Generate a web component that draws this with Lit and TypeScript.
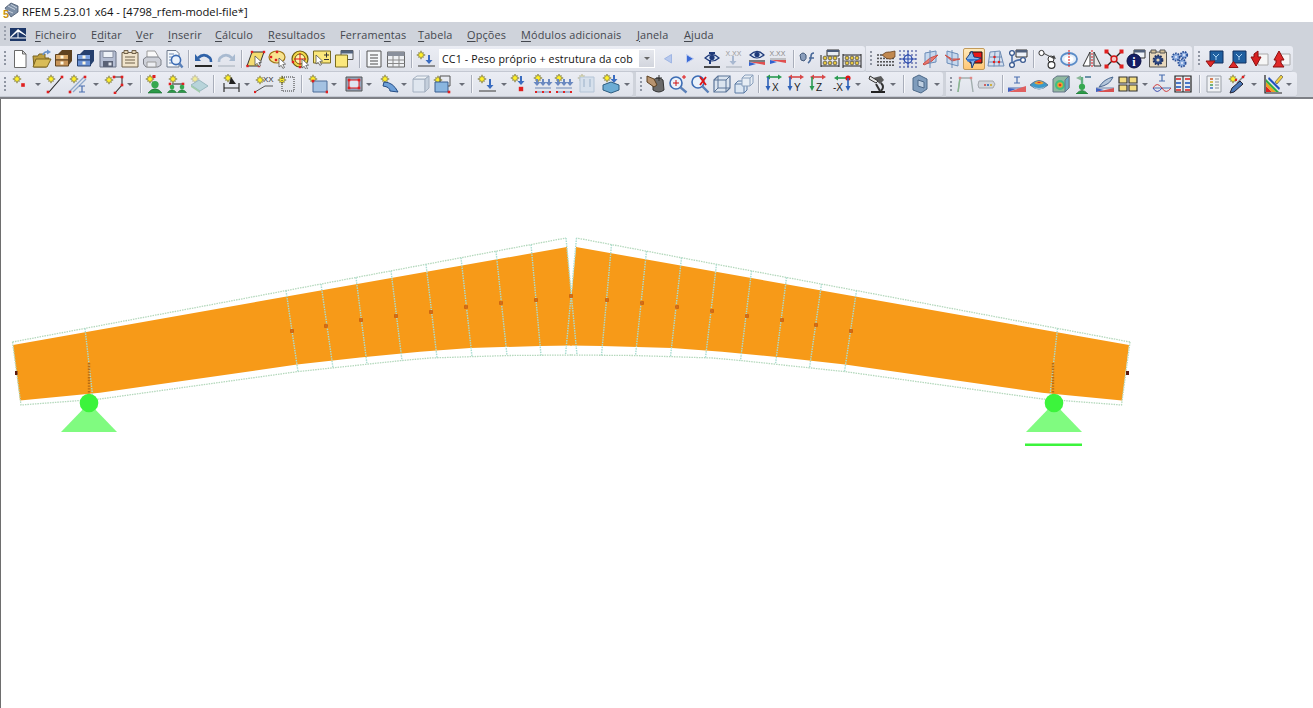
import { LitElement, html, css, svg } from "lit";
import { customElement } from "lit/decorators.js";
import { unsafeSVG } from "lit/directives/unsafe-svg.js";

// ---- icon helpers (20x20 pixel box) ----
const star = (x: number, y: number, r = 4.2, o = 1) => {
  const p: string[] = [];
  for (let i = 0; i < 16; i++) {
    const rr = i % 2 ? r * 0.5 : i % 4 === 0 ? r : r * 0.8;
    const a = (i * Math.PI) / 8;
    p.push(`${(x + rr * Math.cos(a)).toFixed(1)},${(y + rr * Math.sin(a)).toFixed(1)}`);
  }
  return `<polygon points="${p.join(" ")}" fill="#fff02a" stroke="#6f6a3a" stroke-width=".6" opacity="${o}"/>`;
};
const N = (x: number, y: number, s = 3, c = "#e02020") =>
  `<rect x="${x - s / 2}" y="${y - s / 2}" width="${s}" height="${s}" fill="${c}"/>`;
const L = (d: string, c = "#222", w = 1) => `<path d="${d}" fill="none" stroke="${c}" stroke-width="${w}"/>`;
const F = (d: string, c: string, st = "none", w = 1) => `<path d="${d}" fill="${c}" stroke="${st}" stroke-width="${w}"/>`;
const T = (x: number, y: number, s: string, c = "#333", fs = 8) =>
  `<text x="${x}" y="${y}" font-family="Liberation Sans" font-size="${fs}" fill="${c}">${s}</text>`;
const D = (d: string, c: string) => `<path d="${d}" fill="none" stroke="${c}" stroke-dasharray="2 1"/>`;
const cab = (a: string, b: string, c: string) =>
  F("M4 5l4-4h10v11l-4 5z", c) +
  F("M1.5 5.5h13v5.5h-13z", a, c) +
  F("M1.5 11h13v6h-13z", b, c) +
  N(8, 8, 3, "#fff8e0") +
  N(8, 14, 3, "#fff8e0");
const mag = (x = 12, y = 11, c = "#3c6cb4", r = 4.6) =>
  `<circle cx="${x}" cy="${y}" r="${r}" fill="#eaf2fb" stroke="${c}" stroke-width="1.6"/>` + L(`M${x + r * 0.7} ${y + r * 0.7}l${18.5 - x - r * 0.7} ${18.5 - y - r * 0.7}`, "#5a80b8", 2.4);
const cursor = (x: number, y: number) =>
  F(`M${x} ${y}l0 9l2.2 -1.6l1.7 3l1.6 -.9l-1.7 -3l2.8 -.4z`, "#fff", "#555", 0.8);
const eye = (y = 8) =>
  F(`M3 ${y}q7 -7 14 0q-7 6 -14 0z`, "#d8e4f4", "#1f3a7a", 1.2) + `<circle cx="10" cy="${y - 0.5}" r="2.6" fill="#1f3a7a"/>`;
const grad = (y: number) => F(`M2 ${y}h16v3z`, "#e05050") + F(`M2 ${y}v4l7 -2z`, "#3060d0");
const xx = (c = "#9a9a9a") => T(1.5, 6.5, "X.XX", c, 7);
const arrDown = (x: number, y: number, c = "#2e62c0", h = 8) =>
  L(`M${x} ${y}v${h}`, c, 2) + F(`M${x - 3.5} ${y + h - 1}h7l-3.5 4z`, c);
const abacus = () =>
  [5, 10, 15].map((x) => [9, 14].map((y) => `<circle cx="${x}" cy="${y}" r="1.9" fill="#e8c840" stroke="#444" stroke-width=".7"/>`).join("")).join("");
const cube = (x: number, y: number, s: number, st = "#5b7ba4", fill = "#dbe6f2") =>
  F(`M${x} ${y + 3}l3 -3h${s}v${s}l-3 3h-${s}z`, fill, st) + L(`M${x} ${y + 3}h${s}v${s}M${x + s} ${y + 3}l3 -3`, st);
const axis = (label: string, a: string, b: string) =>
  L("M4 3h12", a, 1.6) + F("M14 0.5l4 2.5l-4 2.5z", a) + F("M6 0.5l-4 2.5l4 2.5z", a) + L("M4 3v11", b, 1.6) + F("M1.5 12h5l-2.5 5z", b) + T(8, 17, label, "#222", 10);
const green = (x: number, y: number, s = 1) =>
  F(`M${x - 5 * s} ${y + 5 * s}q${5 * s} -${6 * s} ${10 * s} 0z`, "#2c9a48", "#166a2c", 0.6) + `<circle cx="${x}" cy="${y - 1 * s}" r="${2.6 * s}" fill="#36a850"/>`;
const I = (x: number, y: number, c = "#4a6fb0") => L(`M${x - 3} ${y}h6M${x} ${y}v6M${x - 3} ${y + 6}h6`, c, 1.2);

const icons: Record<string, string> = {
  new: F("M4.5 1.5h8l3.5 3.5v13.5h-11.5z", "#fff", "#6a6a6a") + F("M12.5 1.5v3.5h3.5z", "#dcdcdc", "#6a6a6a"),
  open: F("M1 7h5l1-2h6v4h4l-3 9H2z", "#bfa040", "#7a6420") + F("M4 10h15l-4 8H1z", "#d9bc58", "#7a6420") + L("M11 6q1-4 6-3", "#6a94cc", 1.6) + F("M15 .5l4 2.5l-4 2.5z", "#6a94cc"),
  cabB: cab("#d8a868", "#c8955a", "#5e4220"),
  cabBl: cab("#7ea4e2", "#6a92d6", "#26406e"),
  save: F("M2 2h15l1 1v15h-16z", "#b4bdd2", "#6c7488") + F("M5 2.5h10v6h-10z", "#eef2f8", "#8a92a4") + F("M5 12h10v6h-10z", "#5a6276") + N(12, 15, 3, "#dfe3ec"),
  notes: F("M2 3.5h16v14.5h-16z", "#f0e4cc", "#6f604a") + F("M4 1.5h4v3h-4zM12 1.5h4v3h-4z", "#e2d2b2", "#6f604a") + L("M5 8h10M5 11h10M5 14h10", "#6f604a"),
  print: F("M5 2h8l3 5v4h-11z", "#fafafa", "#9a9a9a") + F("M1.5 10l3-2h12l2.5 3v5l-3 2h-12l-2.5-3z", "#cdd0d8", "#7d8088") + F("M5 13h9v5h-9z", "#eceef2", "#9a9a9a"),
  prev2: F("M3 1.5h9l3 3v13.5h-12z", "#f4f8fc", "#6f7a8c") + L("M5 5h5M5 8h4M5 11h3M5 14h3", "#6f8ab0") + mag(12, 11),
  undo: L("M4 9q6-6 12 0q1 1 1 4", "#2f62a8", 2.6) + F("M1 5l6 7H1z", "#2f62a8") + L("M1 17h17", "#111", 1.8),
  redo: L("M16 9q-6-6-12 0q-1 1-1 4", "#a8bad0", 2.6) + F("M19 5l-6 7h6z", "#a8bad0") + L("M2 17h17", "#c0c6d0", 1.8),
  sel1: F("M6 3h12l-5 14H1z", "#f4dc70", "#333") + N(6, 3, 2.4) + N(18, 3, 2.4) + N(13, 17, 2.4) + N(1.5, 17, 2.4) + cursor(9, 7),
  sel2: `<ellipse cx="9" cy="8" rx="8" ry="6" fill="#f8e490" stroke="#a07818" stroke-width="1.2"/>` + N(3, 8, 2.4) + N(9, 3, 2.4) + N(8, 11, 2.4) + cursor(11, 9),
  sel3: `<circle cx="10" cy="10" r="8" fill="#f4d84a" stroke="#6a5a10" stroke-width="1.2"/><circle cx="10" cy="10" r="5" fill="#fff4b0" stroke="#6a5a10"/>` + L("M10 4v12M4 10h12", "#e01414") + N(10, 18, 2.4) + N(3, 13, 2.4) + cursor(12, 10),
  sel4: F("M1.5 2h17v12h-17z", "#fbe87c", "#7a6c20") + L("M12 6h5M14.5 3.5v5M12 10.5h5", "#333") + cursor(4, 6),
  win: F("M7 1.5h12v9h-12z", "#e8edf4", "#555") + F("M7 1.5h12v3h-12z", "#52627c") + F("M1.5 6h12v12h-12z", "#fbe87c", "#7a6c20"),
  list: F("M3 2h14v16h-14z", "#f6f8fa", "#555") + L("M6 6h8M6 9h8M6 12h8M6 15h8", "#4a4a4a"),
  table: F("M1.5 3h17v15h-17z", "#eff1f4", "#666") + F("M1.5 3h17v4h-17z", "#8a909c") + L("M7 7v11M13 7v11M1.5 11h17M1.5 14.5h17", "#888"),
  load: star(5, 6) + arrDown(13, 6, "#3a6cc0", 6) + L("M2 17h17", "#555", 1.2),
  prevT: F("M13.5 5.5v8.5l-7-4.25z", "#b7c9ee", "#a0b6e4"),
  nextT: F("M6.5 5.5v8.5l7-4.25z", "#3a6ad6", "#bfcdf0"),
  eyeP: eye(9) + L("M8 11v4", "#1f3a7a", 2) + L("M2 18h16", "#222", 1.6) + F("M7 3h6v2h-6z", "#1f3a7a"),
  xxa: xx() + arrDown(9, 7, "#a8b8d0", 6) + L("M2 18h16", "#b6bcc6", 1.4),
  eye2: eye(6) + L("M2 12h16", "#333", 1.2) + grad(13),
  xxb: xx("#888") + L("M2 10h16", "#999") + grad(11),
  gf: F("M2 6q3-4 6 0q1 4-2 6l-3-1z", "#8a9ebc", "#445a7a") + L("M10 14q3-2 3-7q0-3 3-3M11 9h5", "#4a6a9a", 1.6),
  ab1: F("M7 1h12v6h-12z", "#e6ecf4", "#333") + F("M7 1h12v2h-12z", "#4a5a78") + abacus() + L("M1 6v12M19 9v9M1 17h18", "#222"),
  ab2: abacus() + L("M1 5v14M19 5v14M1 6h18M1 17h18", "#222") + L("M1 12h18", "#666"),
  hand: Array.from({ length: 24 }, (_, i) => N(2 + (i % 6) * 3, 6 + Math.floor(i / 6) * 3.4, 1.6, "#333")).join("") + F("M6 6q4-4 8-3l5-1v6l-4 2q-4 1-9-4z", "#c08850", "#5c3a1c", 0.7),
  cross: Array.from({ length: 25 }, (_, i) => N(2 + (i % 5) * 4, 2 + Math.floor(i / 5) * 4, 1.4, "#2a3a90")).join("") + `<circle cx="10" cy="10" r="4" fill="#dbe4f4" stroke="#2040a8" stroke-width="1.2"/>` + L("M10 2v16M2 10h16", "#2040a8"),
  pl1: F("M5 4l11-2v11l-11 2z", "#c6d8ee", "#6a8cb8") + F("M3 15l7-6 8-3-6 6-8 4z", "#e87a70", "#cc5048") + L("M10 1v18", "#6a8cb8"),
  pl2: F("M5 2l11 3v12l-11-3z", "#c6d8ee", "#6a8cb8") + F("M3 6l7 4 8 0-8 2z", "#e87a70", "#cc5048") + L("M10 1v18", "#6a8cb8"),
  pl3: F("M6 3h12v11h-12z", "#e81818", "#111") + F("M2 10l6-8 2 6 7 1-6 3-3 7-1-6z", "#8ab8ea", "#1f3f78") + F("M2 10h15l-13 3z", "#3a78d0"),
  grid: F("M4 3l10-1 4 15H2z", "#d4e0f0", "#6f8cb4") + L("M9 2.5l-1 15M4 8h12M3 13h14M14 3l-1 14", "#6f8cb4") + N(8.5, 8, 2.2) + N(13, 13, 2.2) + N(8, 13, 2.2),
  nodesW: F("M8 1h11v7h-11z", "#eef2f8", "#333") + F("M8 1h11v2.5h-11z", "#50607c") + L("M4 5v10q3-5 10-4", "#4a6fa8", 1.6) + `<circle cx="4" cy="4" r="2.4" fill="#fff" stroke="#3a5a90" stroke-width="1.3"/><circle cx="4" cy="16" r="2.4" fill="#fff" stroke="#3a5a90" stroke-width="1.3"/><circle cx="15" cy="11" r="2.4" fill="#fff" stroke="#3a5a90" stroke-width="1.3"/>`,
  chain: `<circle cx="3.5" cy="4" r="2.6" fill="#fff" stroke="#333"/><circle cx="13" cy="10" r="3" fill="#fff" stroke="#333"/><circle cx="13.5" cy="16" r="3.4" fill="#fff" stroke="#333" stroke-width="1.2"/>` + L("M6 4.5l10 5", "#444") + F("M18 10l-4-1 2-3z", "#444"),
  loop: `<ellipse cx="10" cy="10" rx="8" ry="6" fill="#e4eef8" stroke="#5a8cc8" stroke-width="1.8"/><ellipse cx="10" cy="10" rx="4.5" ry="3" fill="#fff"/>` + D("M10 1v18", "#e01414"),
  mirror: F("M8 3v14H1z", "#fff", "#333") + F("M12 3v14h7z", "#e8e8e8", "#333") + D("M10 1v18", "#e01414"),
  xcross: L("M3 3l14 14M17 3L3 17", "#222", 1.4) + `<circle cx="10" cy="10" r="3" fill="#f0c4c4" stroke="#d01010" stroke-width="1.4"/>` + N(2.5, 2.5, 4) + N(17.5, 2.5, 4) + N(2.5, 17.5, 4) + N(17.5, 17.5, 4),
  info: F("M8 1h11v8h-11z", "#eef2f8", "#333") + F("M8 1h11v2.5h-11z", "#50607c") + `<circle cx="8" cy="12" r="7" fill="#141e66" stroke="#0a0f44"/>` + `<text x="6.2" y="16.5" font-family="Liberation Serif" font-weight="700" font-size="12" fill="#fff">i</text>`,
  gearbox: F("M1.5 3h17v15h-17z", "#e8d8bc", "#555") + F("M3 1h5v3h-5zM12 1h5v3h-5z", "#d4c098", "#555") + `<circle cx="10" cy="11" r="4.4" fill="#2e4a88" stroke="#1d2f60" stroke-width="2" stroke-dasharray="1.6 1.2"/><circle cx="10" cy="11" r="1.6" fill="#e8d8bc"/>`,
  gears: [[6, 8, 3.6], [14, 6, 3.2], [12, 14, 3.6]].map(([x, y, r]) => `<circle cx="${x}" cy="${y}" r="${r}" fill="#8fb0e0" stroke="#2a4f98" stroke-width="1.8" stroke-dasharray="1.6 1"/><circle cx="${x}" cy="${y}" r="1" fill="#eef"/>`).join(""),
  bDown: F("M6 2h13v12h-13z", "#1f5fa0", "#103060") + L("M9 5l3 3 3-3M12 8v3", "#a8d0f0") + F("M2 12h9l-4.5 6z", "#e02828", "#901414"),
  bUp: F("M6 2h13v12h-13z", "#1f5fa0", "#103060") + L("M9 5l3 3 3-3M12 8v3", "#a8d0f0") + F("M2 18.5h9l-4.5-6z", "#e02828", "#901414"),
  rDown: F("M9 5h10v11h-10z", "#f6f6f6", "#aaa") + F("M9 2v6h3l-5 9-5-9h3V5z", "#d82020", "#8a1010"),
  rUp: F("M9 5h10v11h-10z", "#f6f6f6", "#aaa") + F("M8 2l5 9h-3v3l3 4H2l3-4v-3H3z", "#e02828", "#8a1010"),
  // row 2
  sNode: star(7, 5) + N(13, 11, 3.6),
  sLine: star(6, 5) + L("M4 18L17 3", "#222", 1.1) + N(3, 18, 2.6) + N(17, 3, 2.6),
  sDbl: star(6, 5) + L("M2 17L16 3M5 18L18 5", "#8fa8cc", 1.3) + N(2, 18, 2.6) + N(17, 3, 2.6) + I(14, 12),
  sPoly: star(5, 6) + L("M9 3h9v8l-7 8", "#333", 1.1) + N(10, 3, 2.6) + N(18, 3, 2.6) + N(18, 11, 2.6) + N(11, 19, 2.6),
  sSup: star(6, 5) + N(10, 2.5, 3) + green(11, 12, 1.4),
  sSup2: star(6, 5) + L("M5 10h11", "#222") + N(3, 10, 2.6) + N(16, 10, 2.6) + green(5, 14, 0.9) + green(15, 14, 0.9),
  sPlate: star(6, 5, 4.2, 0.45) + F("M2 11l8-5 9 6-8 5z", "#b8d4da", "#9ab8c0") + F("M2 11l9 6v2l-9-6z", "#a0ccaa"),
  sDim: star(7, 4) + L("M3 9v9M18 9v9M3 14h15", "#222", 1.1) + F("M10 3l5 7h-7z", "#222"),
  sXX: star(6, 6) + L("M1 18l10-6h8", "#555") + T(9, 8, "XX", "#333", 8) + N(1, 18, 2.2),
  sDot: star(6, 6) + `<path d="M6 3h12v14h-12z" fill="none" stroke="#333" stroke-dasharray="1 1"/>`,
  sSurf: star(5, 5) + F("M5 7h14v11h-14z", "#a4c2e2", "#4c6c98") + N(5, 7, 2.6) + N(19, 18, 2.6),
  frame: F("M2 3h16v14h-16z", "#95a6bc", "#555") + F("M5 6h10v8h-10z", "#dfe7f0", "#e01414") + N(5, 6, 2.6) + N(15, 6, 2.6) + N(5, 14, 2.6) + N(15, 14, 2.6),
  sCurve: star(5, 5) + F("M4 8q9 0 14 10l-8-1q0-4-7-5z", "#6ea0d8", "#244c84"),
  box3: F("M2 5h12v13h-12z", "#dfe6ef", "#a4b0c0") + F("M2 5l4-3h12l-4 3z", "#eef2f6", "#a4b0c0") + F("M14 5l4-3v12l-4 4z", "#c4cfdc", "#a4b0c0"),
  sSolid: star(5, 6) + F("M2 8h13v10h-13z", "#8ab6e0", "#3a5f90") + L("M7 2h10v10h-2M7 2v6", "#555") + N(16, 18, 2.6),
  sLoad: star(5, 5) + arrDown(13, 5, "#3a6cc0", 7) + L("M2 17h17", "#555", 1.2),
  sLoadN: star(6, 4) + arrDown(12, 2, "#3a6cc0", 6) + N(12, 15, 4.4),
  sLoads: star(5, 4) + L("M2 14h16M2 18h16", "#6f88b4") + [3, 9, 15].map((x) => arrDown(x + 1, 5, "#6a88c0", 4)).join("") + N(3, 18, 2) + N(10, 18, 2) + N(17, 18, 2),
  sLoadsF: star(5, 4, 4.2, 0.45) + F("M3 3h14v15H3z", "#d6e0ec", "#b4c4d6") + L("M7 5v8M13 5v8", "#b8c8da", 2),
  sBox: star(6, 4) + arrDown(13, 1, "#3a6cc0", 5) + F("M2 11l8-3 8 3v5l-8 3-8-3z", "#6cacd4", "#2c5c80"),
  handBox: F("M7 6q5-4 10 0l1 10q-5 4-11 0z", "#6a6a6a", "#333") + F("M1 2l7 3 3 6-3 2-7-5z", "#b89470", "#5c4020") + L("M13 1v6M10 4h6", "#333"),
  magRed: mag(8, 9, "#3c6cb4", 6) + L("M8 6v6M5 9h6", "#d01010") + L("M16 1v4M14 3h4", "#e01414"),
  magX: mag(8, 8, "#3c6cb4", 6) + L("M10 3l6 8M16 3l-6 8", "#e01414", 1.8),
  cubeT: F("M2 6l4-4h12v12l-4 4H2z", "#dbe4ef", "#5a7498", 1.2) + L("M2 6h12v12M14 6l4-4M6 2v12h12M2 18l4-4", "#5a7498"),
  cubes: cube(1, 7, 9) + cube(8, 1, 8, "#8aa0bc", "#e7edf4"),
  axX: axis("X", "#2a9a50", "#2c60b8"),
  axY: axis("Y", "#d84848", "#2c60b8"),
  axZ: axis("Z", "#d84848", "#2a9a50"),
  axNX: L("M4 4h11", "#2a9a50", 1.6) + F("M6 1.5l-4 2.5 4 2.5z", "#2a9a50") + `<circle cx="16" cy="4" r="2.6" fill="#e01414"/>` + L("M16 4v9", "#2c60b8", 1.6) + F("M13.5 12h5l-2.5 5z", "#2c60b8") + T(1, 17, "-X", "#222", 10),
  micro: F("M5 4l8-2 3 4-4 4z", "#5a5a5a") + F("M3 17h14v2H3z", "#222") + L("M13 9q4 4 0 8M8 10l4 7", "#333", 2) + F("M2 2l8 5-2 2-7-4z", "#e4e4e4", "#333"),
  chair: F("M3 4l6-3 8 4v10l-6 4-8-3z", "#7f9cbc", "#4c6888") + F("M8 6l6 2v6l-6-2z", "#c0d0e2", "#4c6888"),
  frameC: L("M3 18l2-14h11l2 14", "#a2aeae", 1.4) + L("M3 18l2-14", "#8ab890", 1.4) + N(5, 4, 2.4, "#d88") + N(16, 4, 2.4, "#d88"),
  pill: F("M2 7h14l2 3-2 4H2l-1-3z", "#d2d6dc", "#a2a6ac") + N(8, 11, 2, "#d06060") + N(11, 11, 2, "#5080c0") + N(14, 11, 2, "#d0b040"),
  iGrad: I(10, 3, "#4a6fb0") + L("M1 14h18", "#4a6fb0") + F("M1 18l18-6v6z", "#e06060") + F("M1 14v4l8-3z", "#4060c0"),
  ell: F("M1 11q9-9 18 0q-9 8-18 0z", "#3a9acb", "#5a7a9a") + F("M5 9q5-4 10 0q-5 3-10 0z", "#f0a030") + F("M8 8.5q2-1.5 4 0q-2 1-4 0z", "#e03030") + F("M3 12q7 4 14 0q-7 7-14 0z", "#a0c0d8"),
  cubeC: F("M2 5l4-3h12v12l-4 4H2z", "#8fb8a0", "#667788") + `<circle cx="9" cy="11" r="5" fill="#40c080"/><circle cx="9" cy="11" r="2.8" fill="#f0a030"/><circle cx="9" cy="11" r="1.3" fill="#e03030"/>` + F("M14 6l4-4v12l-4 4z", "#6aa8c0", "#667788"),
  supA: green(9, 14, 1.2) + L("M9 3v7", "#60b080", 2.4) + F("M3 4l5-2.5v5z", "#8ab898") + L("M12 3h6", "#6a90a8", 2),
  slant: F("M4 13q5-8 14-10q-3 8-14 10z", "#b4c6da", "#4a6890") + L("M1 14h18", "#6a84a8") + F("M1 18l18-4v4z", "#d85050") + F("M1 14v4l8-2z", "#4060c0"),
  four: F("M1 3h8v6h-8zM11 3h8v6h-8zM1 11h8v6h-8zM11 11h8v6h-8z", "#f2dc80", "#333", 1.2),
  iWave: I(10, 1) + L("M1 14h18", "#4a6fb0") + L("M1 14q4-7 9 0", "#d04040") + L("M10 14q4 7 9 0", "#d04040") + L("M1 14q4 7 9 0", "#4050b0"),
  tableC: F("M2 2h16v16h-16z", "#e8ecf2", "#222", 1.2) + F("M3 4h5v2H3zM12 4h5v2h-5z", "#e05050") + F("M3 8h5v2H3zM12 8h5v2h-5z", "#4a78c8") + F("M3 12h5v2H3zM12 12h5v2h-5z", "#4a78c8") + F("M3 15h5v2H3zM12 15h5v2h-5z", "#e05050") + L("M10 2v16", "#222"),
  docC: F("M3 2h14v16h-14z", "#f0f2f4", "#9aa0a8") + L("M6 5h3", "#d06030", 1.6) + L("M6 8h3", "#d8b030", 1.6) + L("M6 11h3", "#50a060", 1.6) + L("M6 14h3", "#4a78c8", 1.6) + L("M11 5h4M11 8h4M11 11h4M11 14h4", "#8a9098"),
  brush: star(5, 5) + L("M17 1l-8 8", "#888", 1.4) + F("M4 14l8-7 3 3-9 8-4 1z", "#4a78b8", "#223") + N(15, 3, 2.4) + N(8, 6, 2),
  rainbow: L("M2 1v18h17", "#222", 1.2) + F("M3 18l0-6 6 6z", "#e02020") + F("M3 12V8l10 10H9z", "#f0a020") + F("M3 8V5l13 13h-3z", "#30b040") + F("M5 5l11 11 1-2-11-11z", "#2050c0") + F("M12 8l6-7 2 2-6 7z", "#f0d040", "#444", 0.6),
};

// ---- toolbar data: [kind/icon, centre x] ----
type Item = [string, number];
type Group = { x0: number; x1: number; items: Item[] };
const row1: Group[] = [
  { x0: 0, x1: 865, items: [["new", 20], ["open", 42], ["cabB", 64], ["cabBl", 86], ["save", 108], ["notes", 130], ["print", 152], ["prev2", 174], ["|", 188], ["undo", 204], ["redo", 226], ["|", 241], ["sel1", 256], ["sel2", 278], ["sel3", 300], ["sel4", 322], ["win", 344], ["|", 359], ["list", 374], ["table", 396], ["|", 411], ["load", 426], ["#combo", 547], ["prevT", 668], ["nextT", 690], ["eyeP", 712], ["xxa", 734], ["eye2", 757], ["xxb", 778], ["|", 793], ["gf", 808], ["ab1", 830], ["ab2", 852]] },
  { x0: 866, x1: 1192, items: [["hand", 886], ["cross", 908], ["pl1", 930], ["pl2", 952], ["*pl3", 974], ["grid", 996], ["nodesW", 1018], ["|", 1033], ["chain", 1048], ["loop", 1069], ["mirror", 1092], ["xcross", 1114], ["info", 1136], ["gearbox", 1158], ["gears", 1180]] },
  { x0: 1194, x1: 1293, items: [["bDown", 1214], ["bUp", 1237], ["rDown", 1259], ["rUp", 1281]] },
];
const row2: Group[] = [
  { x0: 0, x1: 633, items: [["sNode", 20], ["v", 38], ["sLine", 55], ["sDbl", 78], ["v", 96], ["sPoly", 114], ["v", 130], ["|", 140], ["sSup", 154], ["sSup2", 177], ["sPlate", 199], ["|", 213], ["sDim", 231], ["v", 247], ["sXX", 264], ["sDot", 286], ["|", 301], ["sSurf", 318], ["v", 334], ["frame", 354], ["v", 369], ["sCurve", 390], ["v", 404], ["box3", 421], ["sSolid", 443], ["v", 462], ["|", 471], ["sLoad", 487], ["v", 504], ["sLoadN", 519], ["sLoads", 543], ["sLoads", 564], ["sLoadsF", 587], ["sBox", 611], ["v", 627]] },
  { x0: 636, x1: 943, items: [["handBox", 656], ["magRed", 678], ["magX", 700], ["cubeT", 722], ["cubes", 744], ["|", 758], ["axX", 774], ["axY", 796], ["axZ", 818], ["axNX", 842], ["v", 858], ["micro", 878], ["v", 893], ["|", 903], ["chair", 920], ["v", 937]] },
  { x0: 946, x1: 1297, items: [["frameC", 965], ["pill", 987], ["|", 1002], ["iGrad", 1017], ["ell", 1039], ["cubeC", 1061], ["supA", 1083], ["slant", 1105], ["four", 1128], ["v", 1145], ["iWave", 1162], ["tableC", 1183], ["|", 1199], ["docC", 1214], ["brush", 1238], ["v", 1254], ["rainbow", 1273], ["v", 1289]] },
];
const widths = (k: string) => (k === "|" ? 1 : k === "v" ? 6 : k === "#combo" ? 216 : 22);

const menus: [string, string, string][] = [
  ["", "F", "icheiro"], ["E", "d", "itar"], ["", "V", "er"], ["", "I", "nserir"], ["", "C", "álculo"], ["", "R", "esultados"],
  ["Ferrame", "n", "tas"], ["", "T", "abela"], ["", "O", "pções"], ["", "M", "ódulos adicionais"], ["", "J", "anela"], ["", "A", "juda"],
];
const menuX = [35, 91, 136, 168, 215, 268, 340, 418, 467, 521, 637, 684, 760];

// ---- beam geometry (page coordinates) ----
const bottomL: [number, number][] = [[20, 400.5], [100, 392.8], [140, 387], [297, 364.5], [360, 357.5], [420, 351.7], [470, 348], [540, 346], [572, 345.5]];
const outL: [number, number][] = [[21, 405], [100, 399], [297, 371.7], [400, 360.7], [430, 358], [470, 356.7], [510, 355.5], [572, 355]];
const MX = 1142;
const lerp = (pts: [number, number][], x: number) => {
  for (let i = 1; i < pts.length; i++) if (x <= pts[i][0]) {
    const [a, b] = pts[i - 1], [c, d] = pts[i];
    return b + ((x - a) / (c - a)) * (d - b);
  }
  return pts[pts.length - 1][1];
};
const topY = (x: number) => 342 - (x - 12.5) * 0.1879;
const pstr = (p: [number, number][]) => p.map((q) => q.join(",")).join(" ");
const beamL: [number, number][] = [[13, 345], [567, 247], [571.5, 296], ...bottomL.slice().reverse()];
const beamR: [number, number][] = beamL.map(([x, y]) => [x === 571.5 ? 571.5 : MX - x + (x === 567 ? 1 : 0), y]);
const stations: [number, number][] = [[85, 93], [286, 298], [321, 333], [356, 367], [391, 402], [426, 437], [461, 472], [496, 507], [531, 541], [566, 577]];
const nodes = [[292, 331], [326, 326], [361, 320], [396, 316], [431, 312], [466, 307], [501, 303], [536, 300], [571, 296], [607, 300], [642, 303], [677, 307], [712, 311], [747, 316], [782, 320], [816, 325], [851, 331]];

@customElement("app-root")
export class AppRoot extends LitElement {
  static styles = css`
    :host { display: block; width: 1313px; height: 708px; overflow: hidden; background: #fff; font-family: "Open Sans", "Noto Sans", sans-serif; }
    .title { height: 22px; display: flex; align-items: center; background: #fff; font-size: 11.2px; color: #111; }
    .title svg { margin: 0 3px 0 2px; flex: none; }
    .menu { height: 24px; background: #cfd3db; display: flex; align-items: center; font-size: 10.9px; color: #44474e; letter-spacing: .15px; }
    .mi { flex: none; white-space: nowrap; }
    .mi.first { margin-left: 9px; }
    .menu u { text-underline-offset: 1.5px; }
    .logo { flex: none; margin-left: 4px; }
    .grip0 { flex: none; margin-left: 4px; width: 2px; height: 16px; background: repeating-linear-gradient(#9aa0ac 0 2px, transparent 2px 4px); }
    .row { height: 26px; background: #cfd3db; display: flex; }
    .row.second { height: 25px; }
    .group { position: relative; flex: none; display: flex; align-items: center; height: 100%; box-sizing: border-box; border-radius: 0 3px 3px 0; background: linear-gradient(#ebedf4, #dfe2ea); border-bottom: 1px solid #c4c8d2; }
    .gr { position: absolute; left: 4px; top: 5px; width: 2px; height: 15px; background: repeating-linear-gradient(#8f95a2 0 2px, transparent 2px 4px); }
    .btn { flex: none; width: 22px; height: 22px; display: flex; align-items: center; justify-content: center; box-sizing: border-box; }
    .btn.on { border: 1px solid #c29a5a; border-radius: 2px; background: linear-gradient(#ffe9bb, #ffc775); }
    .sep { flex: none; width: 1px; height: 18px; background: #a9aeba; box-shadow: 1px 0 0 #f6f7fa; }
    .arr { flex: none; width: 0; height: 0; border: 3px solid transparent; border-top: 3px solid #6a6e78; border-bottom: 0; margin-top: 1px; box-sizing: content-box; }
    .combo { flex: none; width: 216px; height: 19px; box-sizing: border-box; background: #fff; display: flex; align-items: center; font-size: 10.6px; color: #111; padding-left: 3px; letter-spacing: .15px; white-space: nowrap; overflow: hidden; }
    .combo .txt { flex: 1; overflow: hidden; }
    .combo .dd { flex: none; width: 15px; height: 17px; background: linear-gradient(#e6e8ee, #d2d5dd); display: flex; align-items: center; justify-content: center; margin-right: 1px; }
    .combo .dd i { display: block; width: 0; height: 0; border: 3px solid transparent; border-top: 3px solid #666; border-bottom: 0; }
    .rule { height: 2px; background: #7e8086; }
    .canvas { display: block; width: 1313px; height: 609px; }
  `;

  private renderRow(groups: Group[], second = false) {
    let right = 0;
    return html`<div class="row ${second ? "second" : ""}">
      ${groups.map((g) => {
        const gm = g.x0 - right;
        right = g.x1;
        let cur = g.x0;
        return html`<div class="group" style="width:${g.x1 - g.x0}px;margin-left:${gm}px">
          <div class="gr"></div>
          ${g.items.map(([k, c]) => {
            const w = widths(k);
            const left = c - w / 2;
            const m = left - cur;
            cur = left + w;
            const st = `margin-left:${m}px`;
            if (k === "|") return html`<div class="sep" style=${st}></div>`;
            if (k === "v") return html`<div class="arr" style=${st}></div>`;
            if (k === "#combo")
              return html`<div class="combo" style=${st}><span class="txt">CC1 - Peso próprio + estrutura da cob</span><span class="dd"><i></i></span></div>`;
            const on = k.startsWith("*");
            const n = on ? k.slice(1) : k;
            return html`<div class="btn ${on ? "on" : ""}" style=${st}>
              <svg width="20" height="20" viewBox="0 0 20 20">${unsafeSVG(icons[n] ?? "")}</svg>
            </div>`;
          })}
        </div>`;
      })}
    </div>`;
  }

  render() {
    const dot = "1.5 1";
    return html`
      <div class="title">
        <svg width="17" height="22" viewBox="0 -2 17 22">
          <path d="M3 6l6-5 7 3v6l-7 5z" fill="#7d8fa6" stroke="#46566c" stroke-width=".8"/>
          <path d="M6 4l7 3.5M9 2.5l6 3.5M4 8l7 3" stroke="#c8d2de" fill="none"/>
          <text x="1" y="16" font-family="Liberation Sans" font-weight="700" font-size="11" fill="#c8920c">5</text>
        </svg>
        <span>RFEM 5.23.01 x64 - [4798_rfem-model-file*]</span>
      </div>
      <div class="menu">
        <div class="grip0"></div>
        <svg class="logo" width="16" height="13" viewBox="0 0 16 13">
          <rect width="16" height="13" fill="#1d3768"/>
          <path d="M0 9L8 1l8 6v1L8 3.5 1 9.5zM0 9.5h16v1H0zM7.5 2h1v8h-1z" fill="#fff"/>
        </svg>
        ${menus.map(([a, u, b], i) => html`<span class="mi ${i === 0 ? "first" : ""}" style="width:${menuX[i + 1] - menuX[i]}px">${a}<u>${u}</u>${b}</span>`)}
      </div>
      ${this.renderRow(row1)}
      ${this.renderRow(row2, true)}
      <div class="rule"></div>
      <svg class="canvas" viewBox="0 99 1313 609">
        <rect x="0" y="99" width="1" height="609" fill="#6e6e6e"/>
        <polygon points=${pstr(beamL)} fill="#f79a18"/>
        <polygon points=${pstr(beamR)} fill="#f79a18"/>
        ${[0, 1].map((side) => {
          const m = (x: number) => (side ? MX - x + 0.5 : x);
          const mpts = (p: [number, number][]) => pstr(p.map(([x, y]) => [m(x), y] as [number, number]));
          return svg`
            <polyline points=${mpts([[12.5, 342], [566, 238]])} fill="none" stroke="#b4d8bc" stroke-width="1.3" stroke-dasharray=${dot} />
            <polyline points=${mpts([[12.5, 342], ...outL])} fill="none" stroke="#b4d8bc" stroke-width="1.3" stroke-dasharray=${dot} />
            ${stations.map(([t, b]) => {
              const by = lerp(outL, b);
              return svg`<line x1=${m(t)} y1=${topY(t)} x2=${m(b)} y2=${by} stroke="#a8dcd0" stroke-width="1.4" stroke-dasharray=${dot} />`;
            })}
          `;
        })}
        <line x1="89" y1="363" x2="89" y2="396" stroke="#b86c14" stroke-width="2.4" stroke-dasharray="1.4 1.4"/>
        <line x1="1053" y1="363" x2="1053" y2="396" stroke="#b86c14" stroke-width="2.4" stroke-dasharray="1.4 1.4"/>
        ${nodes.map(([x, y]) => svg`<rect x=${x - 1.2} y=${y - 1.2} width="2.4" height="2.4" fill="#eb8a30" stroke="#c85c0a" stroke-width="1.2"/>`)}
        <rect x="15" y="371" width="2.5" height="4" fill="#5a1a10"/>
        <rect x="1126" y="371" width="3" height="4" fill="#5a1a10"/>
        <polygon points="89,403 117,432 61,432" fill="#80fb80"/>
        <circle cx="89" cy="403" r="9.3" fill="#3cf43c"/>
        <polygon points="1054,403 1082,432 1026,432" fill="#80fb80"/>
        <circle cx="1054" cy="403" r="9.3" fill="#3cf43c"/>
        <rect x="1025" y="443.5" width="57" height="2.5" fill="#3cf43c"/>
      </svg>
    `;
  }
}
